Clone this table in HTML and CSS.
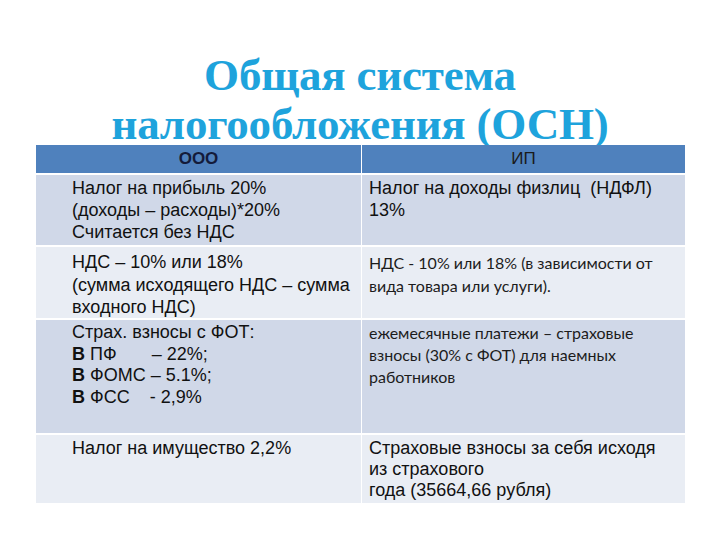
FILE: index.html
```html
<!DOCTYPE html>
<html lang="ru">
<head>
<meta charset="utf-8">
<title>ОСН</title>
<link rel="stylesheet" href="styles.css">
</head>
<body>
<div class="slide">
  <h1 class="title">Общая система<br>налогообложения (ОСН)</h1>
  <div class="table">
    <div class="hcell left"><b>ООО</b></div>
    <div class="hcell right">ИП</div>

    <div class="cell odd left r1">Налог на прибыль 20%<br>(доходы – расходы)*20%<br>Считается без НДС</div>
    <div class="cell odd right r1">Налог на доходы физлиц&nbsp; (НДФЛ)<br>13%</div>

    <div class="cell even left r2">НДС – 10% или 18%<br>(сумма исходящего НДС – сумма<br>входного НДС)</div>
    <div class="cell even right cal r2">НДС - 10% или 18% (в зависимости от<br>вида товара или услуги).</div>

    <div class="cell odd left pre r3">Страх. взносы с ФОТ:
<b>В</b> ПФ       – 22%;
<b>В</b> ФОМС – 5.1%;
<b>В</b> ФСС    - 2,9%</div>
    <div class="cell odd right cal r3">ежемесячные платежи – страховые<br>взносы (30% с ФОТ) для наемных<br>работников</div>

    <div class="cell even left r4">Налог на имущество 2,2%</div>
    <div class="cell even right r4">Страховые взносы за себя исходя<br>из страхового<br>года (35664,66 рубля)</div>
  </div>
</div>
</body>
</html>
```
FILE: styles.css
```css
html, body {
  margin: 0;
  padding: 0;
  background: #ffffff;
}
.slide {
  width: 720px;
  height: 540px;
  display: flex;
  flex-direction: column;
  align-items: center;
}
.title {
  margin: 51px 0 0 0;
  height: 94px;
  font-family: "Liberation Serif", serif;
  font-weight: bold;
  font-size: 45px;
  line-height: 49px;
  color: #1ea3dc;
  text-align: center;
  letter-spacing: -0.2px;
  white-space: nowrap;
}
.table {
  margin-left: 1px;
  width: 649px;
  display: grid;
  grid-template-columns: 325px 324px;
  grid-template-rows: 30px 72px 73px 115px 70px;
  background: #ffffff;
}
.hcell {
  background: #4f81bd;
  font-family: "Liberation Sans", Arial, sans-serif;
  font-size: 17px;
  color: #141b3a;
  display: flex;
  align-items: center;
  justify-content: center;
  border-bottom: 2px solid #ffffff;
}
.hcell.right { border-left: 1px solid #ffffff; color: #1a1a1a; }
.cell {
  font-family: "Liberation Sans", Arial, sans-serif;
  font-size: 18px;
  line-height: 22px;
  color: #111111;
  padding-top: 2px;
  border-bottom: 2px solid #ffffff;
  white-space: nowrap;
}
.cell.left { padding-left: 36px; }
.cell.right { padding-left: 7px; border-left: 1px solid #ffffff; }
.odd { background: #d0d8e8; }
.even { background: #e9edf4; }
.pre { white-space: pre; }
.r1 { padding-top: 2px; }
.r2 { padding-top: 4px; line-height: 22.5px; }
.r3 { padding-top: 2px; line-height: 21.7px; }
.r4 { padding-top: 3px; line-height: 21px; }
.cal {
  font-family: Lato, "Open Sans", sans-serif;
  font-size: 16px;
  color: #1c1c1c;
}
.cal.r2 { line-height: 23px; }
.cal.r3 { line-height: 22px; }
```
